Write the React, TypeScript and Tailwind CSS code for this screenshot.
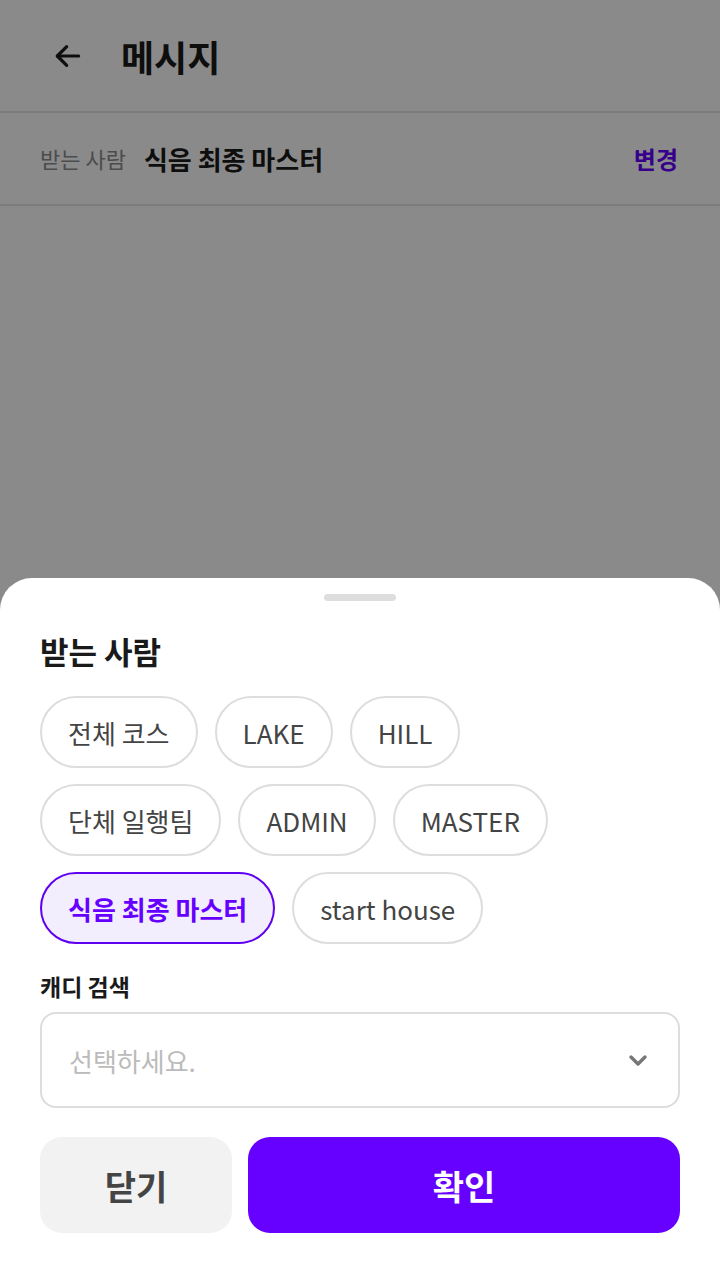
import React from 'react';

const chips = [
  ['전체 코스', 'LAKE', 'HILL'],
  ['단체 일행팀', 'ADMIN', 'MASTER'],
  ['식음 최종 마스터', 'start house'],
];

const selected = '식음 최종 마스터';

const App: React.FC = () => {
  return (
    <div
      className="relative w-[720px] h-[1280px] overflow-hidden bg-white"
      style={{ fontFamily: '"Noto Sans CJK KR", "Noto Sans", sans-serif' }}
    >
      {/* page behind */}
      <div className="flex items-center h-[113px] border-b-2 border-[#e6e6e6] px-[52px]">
        <svg width="32" height="32" viewBox="0 0 24 24" fill="none" stroke="#1a1a1a" strokeWidth="2.4" strokeLinecap="round" strokeLinejoin="round">
          <path d="M20 12H4" />
          <path d="M11 5l-7 7 7 7" />
        </svg>
        <h1 className="ml-[37px] text-[36px] font-bold text-[#1a1a1a] leading-none">메시지</h1>
      </div>
      <div className="flex items-center h-[93px] border-b-2 border-[#e6e6e6] pl-[40px] pr-[42px]">
        <span className="text-[22px] text-[#8c8c8c]">받는 사람</span>
        <span className="ml-[18px] text-[26px] font-bold text-[#1a1a1a]">식음 최종 마스터</span>
        <span className="ml-auto text-[24px] font-bold text-[#6600ff]">변경</span>
      </div>

      {/* dim */}
      <div className="absolute inset-0 bg-black/[0.46]" />

      {/* bottom sheet */}
      <div className="absolute left-0 right-0 bottom-0 h-[702px] bg-white rounded-t-[32px] px-[40px]">
        <div className="flex justify-center pt-[16px]">
          <div className="w-[72px] h-[7px] rounded-full bg-[#dddddd]" />
        </div>
        <h2 className="mt-[30px] text-[31px] font-bold text-[#1a1a1a] leading-[40px]">받는 사람</h2>
        <div className="mt-[25px] flex flex-col gap-[16px]">
          {chips.map((row, i) => (
            <div key={i} className="flex gap-[17px]">
              {row.map((c) =>
                c === selected ? (
                  <div
                    key={c}
                    className="h-[72px] px-[26px] flex items-center rounded-full border-2 border-[#6000f0] bg-[#f3eefe] text-[26px] font-bold text-[#6600ff]"
                  >
                    {c}
                  </div>
                ) : (
                  <div
                    key={c}
                    className="h-[72px] px-[26px] flex items-center rounded-full border-2 border-[#dddddd] text-[26px] text-[#444444]"
                  >
                    {c}
                  </div>
                ),
              )}
            </div>
          ))}
        </div>
        <div className="mt-[26px] text-[23px] font-bold text-[#1a1a1a] leading-[32px]">캐디 검색</div>
        <div className="mt-[10px] h-[96px] rounded-[16px] border-2 border-[#dddddd] flex items-center pl-[27px] pr-[28px]">
          <span className="text-[26px] text-[#bbbbbb]">선택하세요.</span>
          <svg className="ml-auto" width="24" height="24" viewBox="0 0 24 24" fill="none" stroke="#777777" strokeWidth="3.4" strokeLinecap="round" strokeLinejoin="round">
            <path d="M5 9l7 7 7-7" />
          </svg>
        </div>
        <div className="mt-[29px] flex gap-[16px]">
          <button className="w-[192px] h-[96px] rounded-[22px] bg-[#f2f2f2] text-[34px] font-bold text-[#444444]">
            닫기
          </button>
          <button className="flex-1 h-[96px] rounded-[22px] bg-[#6600ff] text-[34px] font-bold text-white">
            확인
          </button>
        </div>
      </div>
    </div>
  );
};

export default App;
